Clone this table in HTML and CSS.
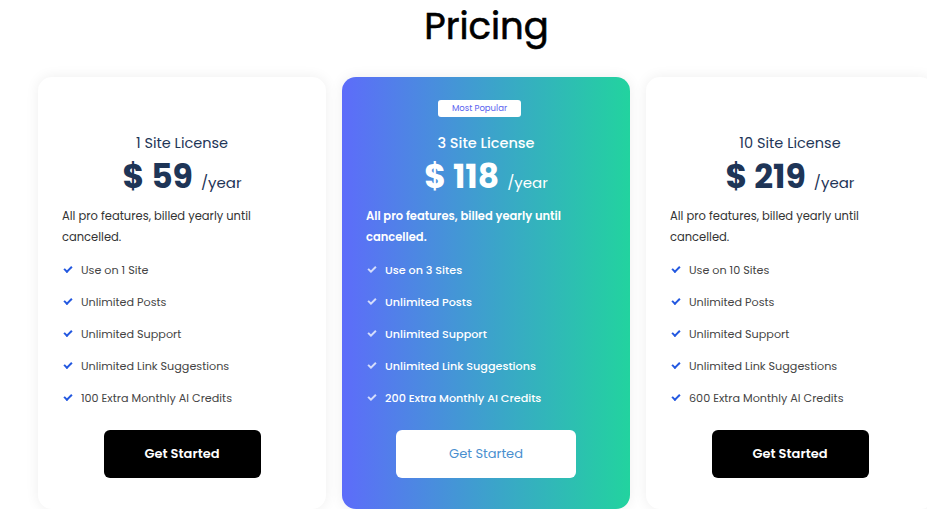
FILE: index.html
```html
<!DOCTYPE html>
<html lang="en">
<head>
    <meta charset="UTF-8">
    <meta name="viewport" content="width=device-width, initial-scale=1.0">
    <title>Pricing</title>
    <link rel="stylesheet" href="styles.css">
</head>
<body>
    <h1 class="page-title">Pricing</h1>

    <div class="plans">
        <div class="plan">
            <span class="badge badge-empty">Most Popular</span>
            <h3 class="plan-name">1 Site License</h3>
            <div class="price"><span class="amount">$ 59</span><span class="period">/year</span></div>
            <p class="desc">All pro features, billed yearly until cancelled.</p>
            <ul class="features">
                <li><span class="check"></span>Use on 1 Site</li>
                <li><span class="check"></span>Unlimited Posts</li>
                <li><span class="check"></span>Unlimited Support</li>
                <li><span class="check"></span>Unlimited Link Suggestions</li>
                <li><span class="check"></span>100 Extra Monthly AI Credits</li>
            </ul>
            <button class="btn">Get Started</button>
        </div>

        <div class="plan plan-popular">
            <span class="badge">Most Popular</span>
            <h3 class="plan-name">3 Site License</h3>
            <div class="price"><span class="amount">$ 118</span><span class="period">/year</span></div>
            <p class="desc">All pro features, billed yearly until cancelled.</p>
            <ul class="features">
                <li><span class="check"></span>Use on 3 Sites</li>
                <li><span class="check"></span>Unlimited Posts</li>
                <li><span class="check"></span>Unlimited Support</li>
                <li><span class="check"></span>Unlimited Link Suggestions</li>
                <li><span class="check"></span>200 Extra Monthly AI Credits</li>
            </ul>
            <button class="btn btn-light">Get Started</button>
        </div>

        <div class="plan">
            <span class="badge badge-empty">Most Popular</span>
            <h3 class="plan-name">10 Site License</h3>
            <div class="price"><span class="amount">$ 219</span><span class="period">/year</span></div>
            <p class="desc">All pro features, billed yearly until cancelled.</p>
            <ul class="features">
                <li><span class="check"></span>Use on 10 Sites</li>
                <li><span class="check"></span>Unlimited Posts</li>
                <li><span class="check"></span>Unlimited Support</li>
                <li><span class="check"></span>Unlimited Link Suggestions</li>
                <li><span class="check"></span>600 Extra Monthly AI Credits</li>
            </ul>
            <button class="btn">Get Started</button>
        </div>
    </div>
</body>
</html>
```

FILE: styles.css
```css
body {
    font-family: "Poppins", Inter, "Noto Sans", sans-serif;
    margin: 0;
    background: #fff;
    overflow: hidden;
}
.page-title {
    margin: 0;
    padding-left: 46px;
    text-align: center;
    font-size: 37px;
    font-weight: 400;
    -webkit-text-stroke: 0.6px #000;
    line-height: 52px;
    color: #000;
}
.plans {
    display: flex;
    gap: 16px;
    margin-top: 25px;
    padding-left: 38px;
    width: 960px;
}
.plan {
    flex: 0 0 288px;
    box-sizing: border-box;
    height: 432px;
    padding: 23px 24px 0 24px;
    background: #fff;
    border-radius: 14px;
    box-shadow: 0 0 14px rgba(0,0,0,0.07);
    display: flex;
    flex-direction: column;
    align-items: center;
    color: #1e3557;
}
.plan-popular {
    background: linear-gradient(90deg, #5d6cfa 0%, #3aa6c8 55%, #22d39f 100%);
    color: #fff;
}
.badge {
    display: inline-block;
    height: 17px;
    line-height: 17px;
    padding: 0 14px;
    background: #fff;
    color: #5b63f0;
    font-size: 8.5px;
    border-radius: 3px;
}
.plan-popular .badge {
    margin-right: 13px;
}
.badge-empty {
    visibility: hidden;
}
.plan-name {
    margin: 15px 0 0;
    font-size: 14.5px;
    font-weight: 400;
    line-height: 22px;
}
.plan-popular .plan-name {
    font-weight: 500;
}
.price {
    margin-top: 2px;
    display: flex;
    align-items: baseline;
    line-height: 42px;
}
.amount {
    font-size: 33px;
    font-weight: 700;
}
.period {
    margin-left: 8px;
    font-size: 15px;
}
.desc {
    align-self: stretch;
    margin: 2px 0 0;
    font-size: 11.5px;
    line-height: 21px;
    color: #333;
    padding-right: 40px;
}
.plan-popular .desc {
    color: #fff;
    font-weight: 600;
}
.features {
    align-self: stretch;
    list-style: none;
    margin: 6px 0 0;
    padding: 0;
}
.features li {
    display: flex;
    align-items: center;
    height: 32px;
    font-size: 11.2px;
    color: #444;
}
.plan-popular .features li {
    color: #fff;
    font-weight: 500;
}
.check {
    width: 6px;
    height: 3px;
    margin: -3px 9px 0 2px;
    border-left: 2px solid #2358e0;
    border-bottom: 2px solid #2358e0;
    transform: rotate(-45deg);
}
.plan-popular .check {
    border-color: rgba(255,255,255,0.75);
}
.btn {
    margin-top: 16px;
    width: 157px;
    height: 48px;
    border: none;
    border-radius: 6px;
    background: #000;
    color: #fff;
    font-family: inherit;
    font-size: 13px;
    font-weight: 600;
    cursor: pointer;
}
.btn-light {
    width: 180px;
    background: #fff;
    color: #4a8fcf;
    font-weight: 400;
}
```
